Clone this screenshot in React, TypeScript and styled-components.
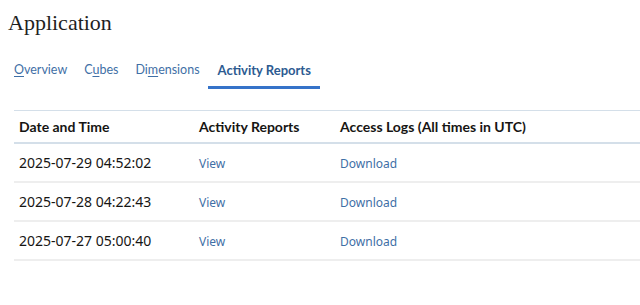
import React from "react";
import styled, { createGlobalStyle } from "styled-components";

const Global = createGlobalStyle`
  body {
    margin: 0;
    background: #ffffff;
    font-family: "Noto Sans", "Open Sans", sans-serif;
    color: #161513;
  }
`;

const Page = styled.div`
  padding: 8px 0 0 8px;
  width: 640px;
  box-sizing: border-box;
  overflow: hidden;
`;

const Title = styled.h1`
  margin: 0;
  font-family: "Liberation Serif", Georgia, serif;
  font-weight: 400;
  font-size: 22px;
  line-height: 30px;
  color: #1f1f1f;
`;

const Tabs = styled.nav`
  display: flex;
  align-items: flex-end;
  margin: 23px 0 0 6px;
`;

const Tab = styled.a<{ $active?: boolean }>`
  display: block;
  padding: ${(p) => (p.$active ? "0 9px 7px 10px" : "0 8px 7px 9px")};
  font-family: "Lato", "Noto Sans", sans-serif;
  font-size: ${(p) => (p.$active ? "13px" : "12.5px")};
  line-height: 18px;
  color: ${(p) => (p.$active ? "#2d5b91" : "#3f6fa6")};
  font-weight: ${(p) => (p.$active ? 700 : 400)};
  border-bottom: 3px solid ${(p) => (p.$active ? "#3573c9" : "transparent")};
  cursor: pointer;
  &:first-child {
    padding-left: 0;
  }
  u {
    text-decoration: underline;
    text-underline-offset: 2px;
  }
`;

const Table = styled.table`
  margin: 21px 0 0 6px;
  width: 640px;
  border-collapse: separate;
  border-spacing: 0;
`;

const Th = styled.th<{ $w?: number }>`
  text-align: left;
  font-family: "Lato", "Noto Sans", sans-serif;
  font-size: 14px;
  font-weight: 700;
  height: 34px;
  padding: 0 5px;
  border-top: 1px solid #d4dfe9;
  border-bottom: 2px solid #d4dfe9;
  width: ${(p) => (p.$w ? `${p.$w}px` : "auto")};
  box-sizing: border-box;
  vertical-align: middle;
  color: #161513;
`;

const Td = styled.td`
  font-size: 14px;
  height: 39px;
  padding: 0 5px;
  border-bottom: 2px solid #eeeeee;
  box-sizing: border-box;
  vertical-align: middle;
  color: #161513;
`;

const Link = styled.a`
  font-size: 12px;
  color: #3f6fa6;
  text-decoration: none;
  cursor: pointer;
`;

const rows = [
  "2025-07-29 04:52:02",
  "2025-07-28 04:22:43",
  "2025-07-27 05:00:40",
];

export default function App() {
  return (
    <Page>
      <Global />
      <Title>Application</Title>
      <Tabs>
        <Tab>
          <u>O</u>verview
        </Tab>
        <Tab>
          C<u>u</u>bes
        </Tab>
        <Tab>
          Di<u>m</u>ensions
        </Tab>
        <Tab $active>Activity Reports</Tab>
      </Tabs>
      <Table>
        <thead>
          <tr>
            <Th $w={180}>Date and Time</Th>
            <Th $w={141}>Activity Reports</Th>
            <Th>Access Logs (All times in UTC)</Th>
          </tr>
        </thead>
        <tbody>
          {rows.map((r) => (
            <tr key={r}>
              <Td>{r}</Td>
              <Td>
                <Link>View</Link>
              </Td>
              <Td>
                <Link>Download</Link>
              </Td>
            </tr>
          ))}
        </tbody>
      </Table>
    </Page>
  );
}
